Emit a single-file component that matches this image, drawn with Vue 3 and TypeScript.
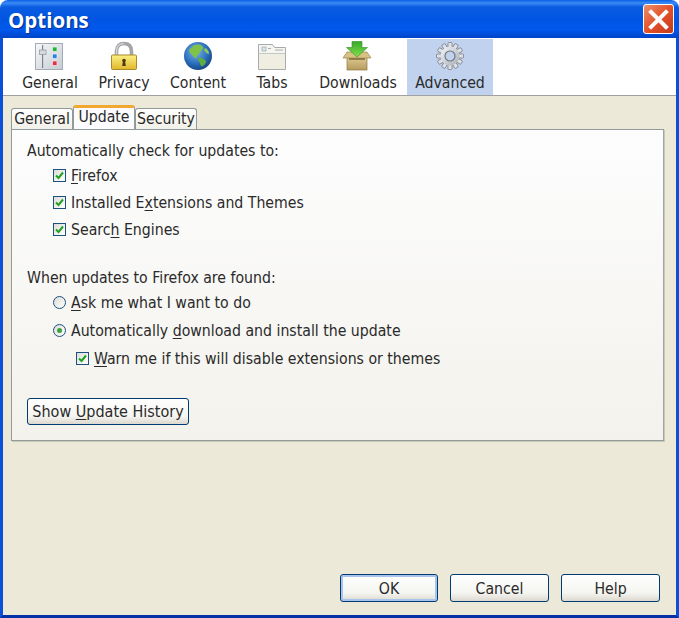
<script setup lang="ts">
interface NavItem { key: string; label: string }
const navItems: NavItem[] = [
  { key: 'general', label: 'General' },
  { key: 'privacy', label: 'Privacy' },
  { key: 'content', label: 'Content' },
  { key: 'tabs', label: 'Tabs' },
  { key: 'downloads', label: 'Downloads' },
  { key: 'advanced', label: 'Advanced' },
]
const gearTeeth: number[] = Array.from({ length: 12 }, (_, i) => i * 30)
</script>

<template>
  <div class="window">
    <header class="titlebar">
      <span class="title">Options</span>
      <button class="close" aria-label="Close">
        <svg width="21" height="21" viewBox="0 0 21 21">
          <path d="M3 3 L18 18 M18 3 L3 18" stroke="#fff" stroke-width="4" stroke-linecap="square" />
        </svg>
      </button>
    </header>
    <div class="client">
      <nav class="toolbar">
        <div v-for="item in navItems" :key="item.key" class="nav" :class="'nav-' + item.key">
          <svg v-if="item.key === 'general'" class="ico shift" width="30" height="30" viewBox="0 0 30 30">
            <defs>
              <linearGradient id="gp" x1="0" y1="0" x2="1" y2="1"><stop offset="0" stop-color="#f7f8fa" /><stop offset="1" stop-color="#c6ccd2" /></linearGradient>
            </defs>
            <rect x="1.500" y="2.500" width="27" height="26" fill="url(#gp)" stroke="#a4acb3" />
            <rect x="8" y="4" width="1.200" height="23" fill="#7d8790" />
            <rect x="5.500" y="9" width="6.500" height="4.500" fill="#d6dade" stroke="#8a949c" stroke-width=".7" />
            <rect x="18.500" y="6" width="4.500" height="4.500" fill="#22b33a" stroke="#e9f4ea" stroke-width=".7" />
            <rect x="18.500" y="13" width="4.500" height="4.500" fill="#2c82e0" stroke="#e7eff8" stroke-width=".7" />
            <rect x="18.500" y="20" width="4.500" height="4.500" fill="#e03045" stroke="#f8e7e9" stroke-width=".7" />
          </svg>
          <svg v-else-if="item.key === 'privacy'" class="ico" width="30" height="30" viewBox="0 0 30 30">
            <defs>
              <linearGradient id="lk" x1="0" y1="0" x2="0" y2="1"><stop offset="0" stop-color="#fbef83" /><stop offset="1" stop-color="#e2b82c" /></linearGradient>
            </defs>
            <path d="M7.500 15 V10.500 C7.500 5 10.500 2.500 15 2.500 C19.500 2.500 22.500 5 22.500 10.500 V15" fill="none" stroke="#a3a5a8" stroke-width="3.600" />
            <path d="M7.500 15 V10.500 C7.500 5 10.500 2.500 15 2.500" fill="none" stroke="#d9dadc" stroke-width="1.200" />
            <rect x="2.500" y="14" width="25" height="14.500" rx="1" fill="url(#lk)" stroke="#a9892a" />
            <circle cx="15" cy="19.500" r="1.800" fill="#4a3a10" />
            <path d="M14 20 h2 l.8 5 h-3.600 z" fill="#4a3a10" />
          </svg>
          <svg v-else-if="item.key === 'content'" class="ico" width="30" height="30" viewBox="0 0 30 30">
            <defs>
              <radialGradient id="gb" cx=".42" cy=".35" r=".7"><stop offset="0" stop-color="#7fb4e8" /><stop offset=".6" stop-color="#2b6fbe" /><stop offset="1" stop-color="#143f7d" /></radialGradient>
            </defs>
            <circle cx="15" cy="15" r="14" fill="url(#gb)" />
            <path d="M9 6 C12 3 17 3 19 5 C21 6 20 9 18 10 C16 11 17 13 15 14 C13 15 14 18 12 17 C10 15 7 12 6 10 C6 8 8 7 9 6 Z" fill="#7fc24a" />
            <path d="M15 17 C18 16 21 18 23 20 C23 23 20 26 18 25 C17 23 17 21 15 19 Z" fill="#5fae3d" />
            <path d="M22 7 C25 8 26 11 26 13 C24 13 22 11 21 9 Z" fill="#8cc95a" />
          </svg>
          <svg v-else-if="item.key === 'tabs'" class="ico" width="30" height="30" viewBox="0 0 30 30">
            <path d="M1.500 28.500 V3.500 H15.500 L17.500 6.500 H28.500 V28.500 Z" fill="#f7f6ee" stroke="#a6abaf" />
            <path d="M1.500 12.500 H28.500" stroke="#c5c8c8" />
            <rect x="2" y="13" width="26" height="15" fill="#efeee0" />
            <rect x="5" y="6" width="4" height="4" fill="#dbe5ee" stroke="#8b9aa8" stroke-width=".6" />
            <path d="M11 7.500 H14 M18 9 H26" stroke="#a9adb0" stroke-width="1.200" />
          </svg>
          <svg v-else-if="item.key === 'downloads'" class="ico shift" width="30" height="30" viewBox="0 0 30 30">
            <defs>
              <linearGradient id="bx" x1="0" y1="0" x2="0" y2="1"><stop offset="0" stop-color="#e3cf97" /><stop offset="1" stop-color="#b59a5c" /></linearGradient>
              <linearGradient id="ar" x1="0" y1="0" x2="0" y2="1"><stop offset="0" stop-color="#39a92c" /><stop offset="1" stop-color="#7fe04a" /></linearGradient>
            </defs>
            <rect x="5" y="15" width="20" height="14" fill="url(#bx)" stroke="#8f7a48" stroke-width=".7" />
            <path d="M5 11 H25 L29 17 H1 Z" fill="#d9c184" stroke="#9b8550" stroke-width=".7" />
            <path d="M7 18 H23" stroke="#7c6636" stroke-width="1.500" />
            <path d="M10 0.500 H20 V6.500 H25.500 L15 16 L4.500 6.500 H10 Z" fill="url(#ar)" stroke="#2f8f26" stroke-width=".6" />
          </svg>
          <svg v-else class="ico" width="30" height="30" viewBox="0 0 30 30">
            <defs>
              <linearGradient id="gr" x1="0" y1="0" x2="1" y2="1"><stop offset="0" stop-color="#f4f5f7" /><stop offset="1" stop-color="#a9aeb6" /></linearGradient>
            </defs>
            <g fill="#dfe2e6" stroke="#787e88" stroke-width=".8">
              <rect v-for="a in gearTeeth" :key="a" x="13" y="1.500" width="4" height="6" rx=".8" :transform="`rotate(${a} 15 15)`" />
            </g>
            <circle cx="15" cy="15" r="9.500" fill="url(#gr)" />
            <circle cx="15" cy="15" r="5" fill="#c1d2ee" stroke="#69707b" stroke-width="1.100" />
          </svg>
          <span class="nav-label">{{ item.label }}</span>
        </div>
      </nav>

      <main class="content">
        <div class="tabs">
          <div class="tab">General</div>
          <div class="tab active">Update</div>
          <div class="tab">Security</div>
        </div>
        <section class="panel">
          <p class="heading">Automatically check for updates to:</p>
          <div class="row indent"><span class="box"><svg width="9" height="9" viewBox="0 0 9 9"><path d="M1 4.500 L3.500 7 L8 1.500" fill="none" stroke="#21a121" stroke-width="2" /></svg></span><span><u>F</u>irefox</span></div>
          <div class="row indent"><span class="box"><svg width="9" height="9" viewBox="0 0 9 9"><path d="M1 4.500 L3.500 7 L8 1.500" fill="none" stroke="#21a121" stroke-width="2" /></svg></span><span>Installed E<u>x</u>tensions and Themes</span></div>
          <div class="row indent"><span class="box"><svg width="9" height="9" viewBox="0 0 9 9"><path d="M1 4.500 L3.500 7 L8 1.500" fill="none" stroke="#21a121" stroke-width="2" /></svg></span><span>Searc<u>h</u> Engines</span></div>

          <p class="heading second">When updates to Firefox are found:</p>
          <div class="row indent"><span class="radio"></span><span><u>A</u>sk me what I want to do</span></div>
          <div class="row indent tall"><span class="radio on"></span><span>Automatically <u>d</u>ownload and install the update</span></div>
          <div class="row indent2 tall"><span class="box"><svg width="9" height="9" viewBox="0 0 9 9"><path d="M1 4.500 L3.500 7 L8 1.500" fill="none" stroke="#21a121" stroke-width="2" /></svg></span><span><u>W</u>arn me if this will disable extensions or themes</span></div>

          <button class="btn history">Show <u>U</u>pdate History</button>
        </section>
        <footer class="actions">
          <button class="btn act focus">OK</button>
          <button class="btn act">Cancel</button>
          <button class="btn act">Help</button>
        </footer>
      </main>
    </div>
  </div>
</template>

<style>
html, body { margin: 0; background: #fff; overflow: hidden; }
</style>

<style scoped>
.window {
  width: 679px;
  height: 618px;
  display: flex;
  flex-direction: column;
  font-family: "DejaVu Sans", sans-serif;
  font-stretch: condensed;
  font-size: 15.700px;
  color: #2a2a2a;
  box-sizing: border-box;
}
.titlebar {
  height: 38px;
  flex: none;
  border-radius: 8px 8px 0 0;
  background: linear-gradient(180deg, #0a5fe6 0, #3a8cf5 3px, #0a5be0 7px, #0055e3 20px, #0058ec 30px, #0043c8 38px);
  display: flex;
  align-items: center;
  justify-content: space-between;
  padding: 0 5px 0 8px;
}
.title {
  color: #fff;
  font-family: "Open Sans", sans-serif;
  font-stretch: normal;
  font-weight: 700;
  font-size: 20.500px;
  line-height: 24px;
  padding-top: 2px;
  text-shadow: 1px 1px 1px #0a2f90;
}
.close {
  width: 31px;
  height: 30px;
  padding: 0;
  border: 1px solid #fff;
  border-radius: 3px;
  background: linear-gradient(135deg, #e8906c, #e4512a 50%, #c23a18);
  display: flex;
  align-items: center;
  justify-content: center;
}
.client {
  flex: 1;
  min-height: 0;
  display: flex;
  flex-direction: column;
  border: solid #0a50d8;
  border-width: 0 3px 3px;
  border-bottom-color: #0630a8;
  background: #ece9d8;
}
.toolbar {
  height: 58px;
  flex: none;
  box-sizing: border-box;
  background: #fff;
  border-bottom: 1px solid #a0a0a0;
  display: flex;
  padding-left: 10px;
}
.nav {
  width: 74px;
  flex: none;
  box-sizing: border-box;
  padding-top: 3px;
  display: flex;
  flex-direction: column;
  align-items: center;
}
.nav-downloads { width: 98px; }
.nav-advanced { width: 86px; background: #c1d2ee; margin-top: 1px; padding-top: 2px; }
.ico { flex: none; }
.ico.shift { margin-right: 3px; }
.nav-label { margin-top: 3px; line-height: 18px; white-space: nowrap; }
.content {
  flex: 1;
  min-height: 0;
  display: flex;
  flex-direction: column;
  padding: 9px 12px 13px 8px;
}
.tabs {
  display: flex;
  height: 24px;
  align-items: flex-end;
  flex: none;
}
.tab {
  height: 21px;
  box-sizing: border-box;
  width: 62px;
  border: 1px solid #919b9c;
  border-bottom: 0;
  border-radius: 3px 3px 0 0;
  background: linear-gradient(180deg, #fff, #f1f0e8);
  text-align: center;
  line-height: 20px;
  white-space: nowrap;
}
.tab.active {
  height: 24px;
  border-top: 3px solid #f0a832;
  background: #fcfcfe;
  line-height: 18px;
}
.panel {
  height: 312px;
  flex: none;
  box-sizing: border-box;
  border: 1px solid #919b9c;
  border-right-color: #a0a6a8;
  background: linear-gradient(180deg, #fdfdfe, #f3f2ec);
  padding: 11px 15px 0;
  box-shadow: 1px 1px 0 #c9c7b6;
  display: flex;
  flex-direction: column;
  align-items: flex-start;
}
.heading { margin: 0 0 1px; line-height: 20px; height: 20px; white-space: nowrap; }
.heading.second { margin-top: 25px; }
.row {
  display: flex;
  align-items: center;
  gap: 5px;
  height: 27px;
  white-space: nowrap;
}
.row.indent { padding-left: 26px; }
.row.indent2 { padding-left: 49px; }
.row.tall { height: 28px; }
u { text-underline-offset: 2px; text-decoration-thickness: 1px; }
.box {
  width: 13px;
  height: 13px;
  box-sizing: border-box;
  border: 1px solid #1c5180;
  background: linear-gradient(135deg, #dcdcd7, #fff);
  display: flex;
  align-items: center;
  justify-content: center;
  flex: none;
}
.radio {
  width: 13px;
  height: 13px;
  box-sizing: border-box;
  border: 1px solid #1c5180;
  border-radius: 50%;
  background: linear-gradient(135deg, #dcdcd7, #fff);
  position: relative;
  flex: none;
}
.radio.on::after {
  content: "";
  position: absolute;
  left: 3px;
  top: 3px;
  width: 5px;
  height: 5px;
  border-radius: 50%;
  background: #3fa03f;
}
.btn {
  box-sizing: border-box;
  border: 1px solid #003c74;
  border-radius: 3px;
  background: linear-gradient(180deg, #fff, #f4f4f0 70%, #dcd8ce);
  font: inherit;
  font-stretch: condensed;
  color: #2a2a2a;
  padding: 0;
}
.history { width: 162px; height: 27px; margin-top: 26px; font-size: 16px; }
.actions {
  margin-top: auto;
  display: flex;
  justify-content: flex-end;
  gap: 12px;
  padding-right: 4px;
}
.act { width: 99px; height: 28px; }
.focus { box-shadow: inset 0 0 0 2px #a9c4ec; width: 98px; }
</style>
